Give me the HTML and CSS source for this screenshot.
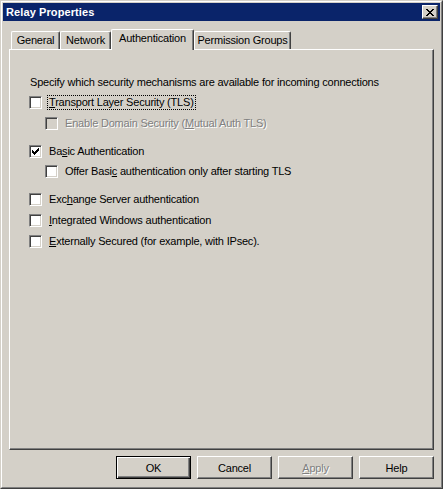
FILE: index.html
```html
<!DOCTYPE html>
<html>
<head>
<meta charset="utf-8">
<title>Relay Properties</title>
<link rel="stylesheet" href="styles.css">
</head>
<body>
<div class="window">
  <div class="frame">
    <div class="titlebar">
      <span class="title">Relay Properties</span>
      <button class="close" aria-label="Close"><svg width="8" height="7" viewBox="0 0 8 7" shape-rendering="crispEdges"><path fill="#000" d="M0 0h2v1h-2zM6 0h2v1h-2zM1 1h2v1h-2zM5 1h2v1h-2zM2 2h4v1h-4zM3 3h2v1h-2zM2 4h4v1h-4zM1 5h2v1h-2zM5 5h2v1h-2zM0 6h2v1h-2zM6 6h2v1h-2z"/></svg></button>
    </div>
    <div class="body">
      <div class="tabs">
        <div class="tab tab-general">General</div>
        <div class="tab tab-network">Network</div>
        <div class="tab tab-auth selected">Authentication</div>
        <div class="tab tab-perm">Permission Groups</div>
      </div>
      <div class="panel">
        <p class="intro">Specify which security mechanisms are available for incoming connections</p>
        <div class="row"><span class="cb"></span><span class="label focus"><u>T</u>ransport Layer Security (TLS)</span></div>
        <div class="row indent"><span class="cb disabled"></span><span class="label disabled-text">Enable Domain Security (<u>M</u>utual Auth TLS)</span></div>
        <div class="row group"><span class="cb"><svg width="7" height="7" viewBox="0 0 7 7" shape-rendering="crispEdges"><path fill="#000" d="M0 2h1v3h-1zM1 3h1v3h-1zM2 4h1v3h-1zM3 3h1v3h-1zM4 2h1v3h-1zM5 1h1v3h-1zM6 0h1v3h-1z"/></svg></span><span class="label">Ba<u>s</u>ic Authentication</span></div>
        <div class="row indent tight"><span class="cb"></span><span class="label">Offer Basi<u>c</u> authentication only after starting TLS</span></div>
        <div class="row group"><span class="cb"></span><span class="label">Exc<u>h</u>ange Server authentication</span></div>
        <div class="row"><span class="cb"></span><span class="label"><u>I</u>ntegrated Windows authentication</span></div>
        <div class="row"><span class="cb"></span><span class="label"><u>E</u>xternally Secured (for example, with IPsec).</span></div>
      </div>
      <div class="buttons">
        <button class="btn default">OK</button>
        <button class="btn">Cancel</button>
        <button class="btn disabled-text"><u>A</u>pply</button>
        <button class="btn">Help</button>
      </div>
    </div>
  </div>
</div>
</body>
</html>
```
FILE: styles.css
```css
html, body {
  margin: 0;
  background: #d4d0c8;
}
body {
  font-family: "Liberation Sans", Arial, sans-serif;
  font-size: 11px;
  letter-spacing: -0.2px;
  color: #000;
}
.window {
  width: 443px;
  height: 489px;
  box-sizing: border-box;
  border: 1px solid;
  border-color: #d4d0c8 #404040 #404040 #d4d0c8;
}
.frame {
  height: 100%;
  box-sizing: border-box;
  border: 1px solid;
  border-color: #fff #808080 #808080 #fff;
  padding: 1px;
  display: flex;
  flex-direction: column;
}
.titlebar {
  height: 18px;
  flex: none;
  background: #0a246a;
  display: flex;
  align-items: center;
  justify-content: space-between;
  padding: 0 2px 0 3px;
}
.title {
  color: #fff;
  font-weight: bold;
  font-size: 11px;
  letter-spacing: 0.1px;
}
.close {
  width: 16px;
  height: 14px;
  padding: 0;
  box-sizing: border-box;
  background: #d4d0c8;
  border: 1px solid;
  border-color: #fff #404040 #404040 #fff;
  box-shadow: inset -1px -1px #808080;
  display: flex;
  align-items: center;
  justify-content: center;
}
.close svg { display: block; }
.body {
  padding: 8px 6px 0 6px;
}
.tabs {
  display: flex;
  align-items: flex-end;
  height: 20px;
  padding-left: 2px;
  position: relative;
  z-index: 1;
}
.tab {
  height: 18px;
  box-sizing: border-box;
  border-left: 1px solid #fff;
  border-top: 1px solid #fff;
  border-right: 1px solid #404040;
  box-shadow: inset -1px 0 #808080;
  border-top-left-radius: 2px;
  border-top-right-radius: 2px;
  text-align: center;
  line-height: 16px;
  background: #d4d0c8;
  white-space: nowrap;
}
.tab.selected {
  height: 21px;
  margin-bottom: -1px;
  line-height: 16px;
}
.tab-general { width: 49px; }
.tab-network { width: 51px; }
.tab-auth { width: 83px; }
.tab-perm { width: 97px; }
.panel {
  height: 401px;
  box-sizing: border-box;
  border: 1px solid;
  border-color: #fff #404040 #404040 #fff;
  box-shadow: inset -1px -1px #808080;
  padding: 26px 0 0 19px;
}
.intro {
  margin: 0 0 0 1px;
  line-height: 12px;
}
.row {
  display: flex;
  align-items: center;
  height: 13px;
  margin-top: 8px;
}
.row.group { margin-top: 15px; }
.row.tight { margin-top: 7px; }
.row.indent { padding-left: 16px; }
.cb {
  width: 13px;
  height: 13px;
  flex: none;
  box-sizing: border-box;
  border: 1px solid;
  border-color: #808080 #fff #fff #808080;
  box-shadow: inset 1px 1px #404040, inset -1px -1px #d4d0c8;
  background: #fff;
  padding: 2px;
}
.cb svg { display: block; }
.cb.disabled { background: #d4d0c8; }
.label {
  margin-left: 6px;
  padding: 0 1px;
  line-height: 13px;
  white-space: nowrap;
}
.label.focus {
  outline: 1px dotted #000;
  outline-offset: 0;
}
.disabled-text {
  color: #808080;
  text-shadow: 1px 1px 0 #fff;
}
.buttons {
  display: flex;
  justify-content: flex-end;
  gap: 6px;
  margin-top: 6px;
}
.btn {
  width: 75px;
  height: 23px;
  box-sizing: border-box;
  padding: 0;
  background: #d4d0c8;
  border: 1px solid;
  border-color: #fff #404040 #404040 #fff;
  box-shadow: inset -1px -1px #808080;
  font: inherit;
  font-size: 11px;
  letter-spacing: inherit;
  color: #000;
}
.btn.disabled-text {
  color: #808080;
}
.btn.default {
  border: 1px solid #000;
  box-shadow: inset 1px 1px #fff, inset -1px -1px #404040, inset -2px -2px #808080;
}
```
